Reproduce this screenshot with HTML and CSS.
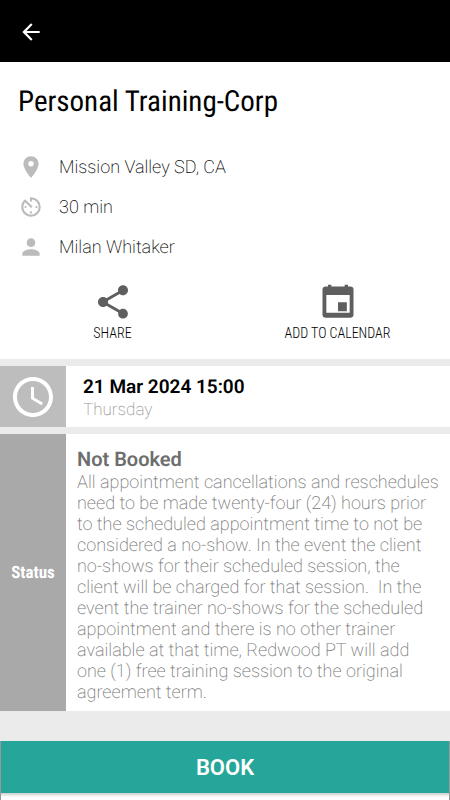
FILE: index.html
```html
<!DOCTYPE html>
<html lang="en">
<head>
<meta charset="utf-8">
<meta name="viewport" content="width=device-width, initial-scale=1">
<title>Personal Training-Corp</title>
<link rel="stylesheet" href="styles.css">
</head>
<body>
<header class="topbar">
  <button class="back" type="button" aria-label="Back">
    <svg viewBox="0 0 24 24" width="26" height="26"><path d="M20 11H7.83l5.59-5.59L12 4l-8 8 8 8 1.41-1.41L7.83 13H20v-2z"/></svg>
  </button>
</header>
<main>
  <section class="summary">
    <h1>Personal Training-Corp</h1>
    <ul class="facts">
      <li><svg viewBox="0 0 24 24" width="26" height="26"><path d="M12 2C8.13 2 5 5.13 5 9c0 5.25 7 13 7 13s7-7.75 7-13c0-3.87-3.13-7-7-7zm0 9.5a2.5 2.5 0 1 1 0-5 2.5 2.5 0 0 1 0 5z"/></svg>Mission Valley SD, CA</li>
      <li><svg viewBox="0 0 24 24" width="26" height="26"><path d="M11 17c0 .55.45 1 1 1s1-.45 1-1-.45-1-1-1-1 .45-1 1zm0-14v4h2V5.08c3.39.49 6 3.39 6 6.92 0 3.87-3.13 7-7 7s-7-3.13-7-7c0-1.68.59-3.22 1.58-4.42L12 13l1.41-1.41-6.8-6.8v.02C4.42 6.45 3 9.05 3 12c0 4.97 4.02 9 9 9a9 9 0 0 0 0-18h-1zm7 9c0-.55-.45-1-1-1s-1 .45-1 1 .45 1 1 1 1-.45 1-1zM6 12c0 .55.45 1 1 1s1-.45 1-1-.45-1-1-1-1 .45-1 1z"/></svg>30 min</li>
      <li><svg viewBox="0 0 24 24" width="26" height="26"><path d="M12 12c2.21 0 4-1.79 4-4s-1.79-4-4-4-4 1.79-4 4 1.79 4 4 4zm0 2c-2.67 0-8 1.34-8 4v2h16v-2c0-2.66-5.33-4-8-4z"/></svg>Milan Whitaker</li>
    </ul>
    <div class="actions">
      <button type="button"><svg viewBox="0 0 24 24" width="40" height="40"><path d="M18 16.08c-.76 0-1.44.3-1.96.77L8.91 12.7c.05-.23.09-.46.09-.7s-.04-.47-.09-.7l7.05-4.11c.54.5 1.25.81 2.04.81 1.66 0 3-1.34 3-3s-1.34-3-3-3-3 1.34-3 3c0 .24.04.47.09.7L8.04 9.81C7.5 9.31 6.79 9 6 9c-1.66 0-3 1.34-3 3s1.34 3 3 3c.79 0 1.5-.31 2.04-.81l7.12 4.16c-.05.21-.08.43-.08.65 0 1.61 1.31 2.92 2.92 2.92s2.92-1.31 2.92-2.92-1.31-2.92-2.92-2.92z"/></svg>SHARE</button>
      <button type="button"><svg viewBox="0 0 24 24" width="40" height="40"><path d="M17.300 12.200h-5.300v5.300h5.300v-5.300zM16 1.600v1.100H8V1.600H6v1.100H4.600c-1 0-1.900.6-1.900 1.700v15.200c0 1.100.8 1.800 1.900 1.800h14.800c1.100 0 1.900-.7 1.900-1.800V4.400c0-1.100-.8-1.700-1.900-1.700H18V1.600h-2zm3 16.900H5V7.800h14v10.700z"/></svg>ADD TO CALENDAR</button>
    </div>
  </section>
  <section class="row">
    <div class="side side-time">
      <svg viewBox="0 0 24 24" width="48" height="48"><path d="M11.99 2C6.47 2 2 6.48 2 12s4.47 10 9.99 10C17.52 22 22 17.52 22 12S17.52 2 11.99 2zM12 20c-4.42 0-8-3.58-8-8s3.58-8 8-8 8 3.58 8 8-3.58 8-8 8zm.5-13H11v6l5.25 3.15.75-1.23-4.5-2.67z"/></svg>
    </div>
    <div class="when">
      <h2>21 Mar 2024 15:00</h2>
      <p>Thursday</p>
    </div>
  </section>
  <section class="row">
    <div class="side side-status">Status</div>
    <div class="status">
      <h2>Not Booked</h2>
      <p>All appointment cancellations and reschedules need to be made twenty-four (24) hours prior to the scheduled appointment time to not be considered a no-show. In the event the client no-shows for their scheduled session, the client will be charged for that session.&nbsp; In the event the trainer no-shows for the scheduled appointment and there is no other trainer available at that time, Redwood PT will add one (1) free training session to the original agreement term.</p>
    </div>
  </section>
</main>
<footer class="footer"><button class="book" type="button">BOOK</button></footer>
</body>
</html>
```
FILE: styles.css
```css
* {
  box-sizing: border-box;
}

body {
  margin: 0;
  min-height: 100vh;
  display: flex;
  flex-direction: column;
  background: #ebebeb;
  color: #000;
  font-family: Roboto, "Liberation Sans", sans-serif;
  font-size: 18px;
  text-rendering: geometricPrecision;
}

h1,
h2,
p,
ul {
  margin: 0;
  padding: 0;
}

button {
  border: 0;
  padding: 0;
  background: none;
  color: inherit;
  font: inherit;
  cursor: pointer;
}

svg {
  display: block;
  fill: currentColor;
}

.topbar {
  display: flex;
  align-items: center;
  height: 62px;
  padding: 2px 18px 0;
  background: #000;
  color: #fff;
}

main {
  display: flex;
  flex-direction: column;
  gap: 7px;
}

.summary {
  padding: 21px 0 17px;
  background: #fff;
}

h1 {
  padding: 0 18px;
  font-family: "Roboto Condensed", Roboto, sans-serif;
  font-size: 29px;
  line-height: 38px;
  font-weight: 400;
}

.facts {
  padding: 26px 18px 0;
  list-style: none;
  font-weight: 200;
}

.facts li {
  display: grid;
  grid-template-columns: 26px 1fr;
  column-gap: 15px;
  align-items: center;
  height: 40px;
}

.facts svg {
  justify-self: center;
  color: #bbb;
}

.actions {
  display: grid;
  grid-template-columns: 1fr 1fr;
  margin-top: 15px;
}

.actions button {
  display: flex;
  flex-direction: column;
  align-items: center;
  gap: 2px;
  font-family: "Roboto Condensed", Roboto, sans-serif;
  font-size: 14px;
  line-height: 18px;
  font-weight: 300;
}

.actions svg {
  color: #5f5f5f;
}

.row {
  display: grid;
  grid-template-columns: 66px 1fr;
  background: #fff;
}

.side {
  display: flex;
  align-items: center;
  justify-content: center;
  color: #fff;
}

.side-time {
  background: #bdbdbd;
}

.side-status {
  background: #a9a9a9;
  font-family: "Roboto Condensed", Roboto, sans-serif;
  font-size: 17px;
  font-weight: 700;
}

.when {
  padding: 8px 17px 6px;
}

.when h2 {
  font-size: 19px;
  line-height: 25px;
  font-weight: 600;
}

.when p {
  color: #999;
  font-size: 17px;
  line-height: 22px;
  font-weight: 200;
}

.status {
  padding: 13px 11px 8px;
}

.status h2 {
  color: #6e6e6e;
  font-size: 20px;
  line-height: 25px;
  font-weight: 600;
}

.status p {
  color: #777;
  line-height: 21px;
  font-weight: 200;
}

.footer {
  margin-top: auto;
  padding-bottom: 7px;
  background: linear-gradient(#ccc, #fff 4px) bottom / 100% 7px no-repeat;
  border: solid #999;
  border-width: 0 1px;
}

.book {
  display: block;
  width: 100%;
  height: 52px;
  background: #26a69a;
  color: #fff;
  font-size: 22px;
  font-weight: 600;
}
```
